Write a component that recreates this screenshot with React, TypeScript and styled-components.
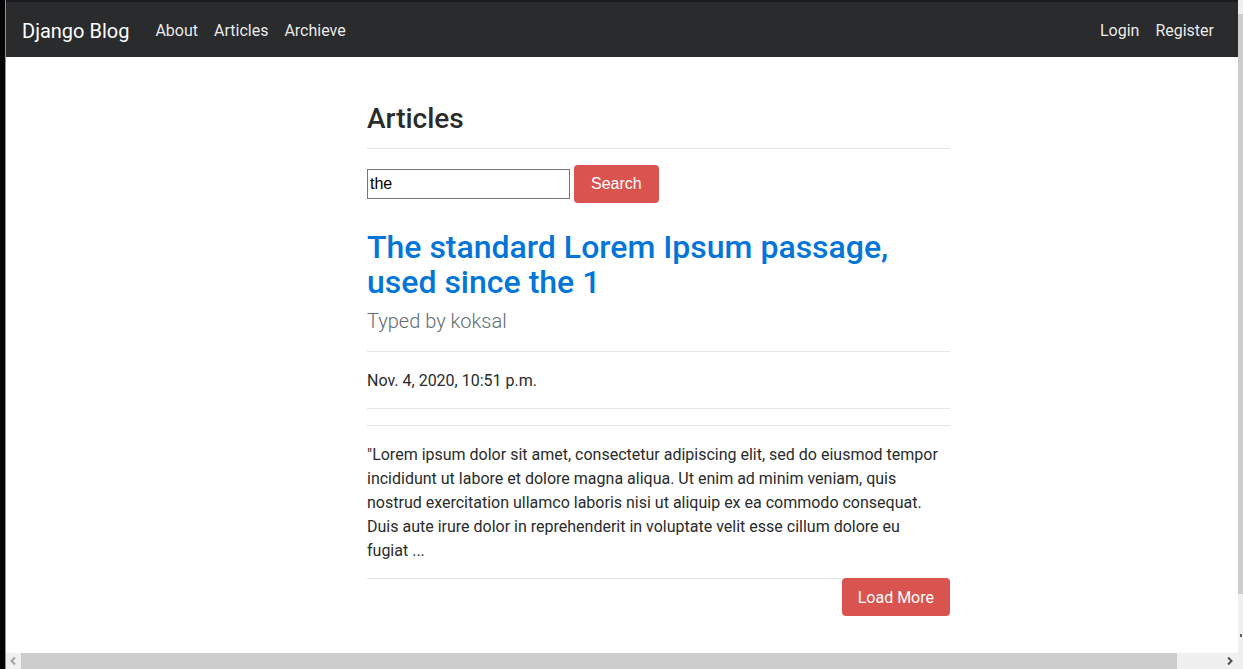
import React from "react";
import styled, { createGlobalStyle } from "styled-components";

const FONT = `"Segoe UI", Roboto, "Noto Sans", "Liberation Sans", sans-serif`;
const ARIAL = `"Liberation Sans", Arial, sans-serif`;

const Global = createGlobalStyle`
  html, body { margin: 0; padding: 0; background: #000; overflow: hidden; }
  * { box-sizing: border-box; }
`;

const Frame = styled.div`
  display: flex;
  width: 1243px;
  height: 669px;
  background: #000;
  font-family: ${FONT};
`;

const EdgeStrip = styled.div`
  width: 5px;
  background: #050505;
`;

const AccentLine = styled.div`
  width: 1px;
  background: #1cc6d3;
`;

const Viewport = styled.div`
  display: flex;
  flex-direction: column;
  width: 1232px;
`;

const TopStrip = styled.div`
  height: 2px;
  background: #1a1b1f;
`;

const Navbar = styled.nav`
  display: flex;
  align-items: center;
  height: 55px;
  padding: 3px 16px 0;
  background: #292b2c;
`;

const Brand = styled.a`
  font-size: 20px;
  line-height: 30px;
  color: #fff;
  margin-right: 18px;
  text-decoration: none;
`;

const NavList = styled.div<{ $push?: boolean }>`
  display: flex;
  margin-left: ${(p) => (p.$push ? "auto" : "0")};
`;

const NavLink = styled.a`
  padding: 0 8px;
  font-size: 16px;
  line-height: 24px;
  color: rgba(255, 255, 255, 0.92);
  text-decoration: none;
`;

const Page = styled.main`
  flex: 1;
  background: #fff;
  overflow: hidden;
`;

const Container = styled.div`
  width: 583px;
  margin-left: 361px;
  padding-top: 47px;
  color: #292b2c;
`;

const Heading = styled.h3`
  margin: 0;
  font-size: 28px;
  font-weight: 500;
  line-height: 1.1;
`;

const Rule = styled.hr<{ $top?: number; $bottom?: number }>`
  border: 0;
  border-top: 1px solid rgba(0, 0, 0, 0.1);
  margin: ${(p) => p.$top ?? 16}px 0 ${(p) => p.$bottom ?? 16}px;
`;

const SearchForm = styled.form`
  display: flex;
  align-items: center;
  gap: 4px;
  margin: 0 0 27px;
`;

const SearchInput = styled.input`
  width: 203px;
  height: 30px;
  padding: 1px 2px;
  border: 1px solid #767676;
  font-family: ${ARIAL};
  font-size: 16px;
  color: #000;
`;

const DangerButton = styled.button<{ $arial?: boolean }>`
  height: 38px;
  padding: 0 ${(p) => (p.$arial ? 17 : 16)}px;
  border: 0;
  border-radius: 4px;
  background: #d9534f;
  color: #fff;
  font-family: ${(p) => (p.$arial ? ARIAL : FONT)};
  font-size: 16px;
`;

const Title = styled.h2`
  margin: 0 0 6px;
  font-size: 32px;
  font-weight: 500;
  line-height: 1.1;
  color: #0275d8;
`;

const Lead = styled.p`
  margin: 0;
  font-size: 20px;
  font-weight: 300;
  line-height: 1.5;
  color: #636c72;
`;

const Text = styled.p`
  margin: 0;
  max-width: 575px;
  font-size: 16px;
  line-height: 24px;
`;

const Footer = styled.div`
  display: flex;
  align-items: flex-start;
  margin-top: 15px;
`;

const FooterRule = styled.div`
  flex: 1;
  border-top: 1px solid rgba(0, 0, 0, 0.1);
`;

const HScroll = styled.div`
  display: flex;
  height: 16px;
  background: #f0f0f0;
`;

const ArrowCell = styled.div<{ $w: number }>`
  display: flex;
  align-items: center;
  justify-content: center;
  width: ${(p) => p.$w}px;
`;

const HThumb = styled.div`
  width: 1156px;
  background: #cdcdcd;
`;

const Track = styled.div`
  flex: 1;
`;

const VScroll = styled.div`
  display: flex;
  flex-direction: column;
  width: 5px;
  background: #f0f0f0;
`;

const VThumb = styled.div`
  height: 580px;
  margin-top: 14px;
  background: #cdcdcd;
`;

const VArrowDot = styled.div`
  width: 2px;
  height: 3px;
  margin: 40px 0 0 2px;
  background: #606060;
`;

const Chevron = ({ dir, color }: { dir: "left" | "right"; color: string }) => (
  <svg width="7" height="8" viewBox="0 0 7 8">
    <path
      d={dir === "left" ? "M5 0.5 L1.5 4 L5 7.5" : "M2 0.5 L5.5 4 L2 7.5"}
      fill="none"
      stroke={color}
      strokeWidth="2"
    />
  </svg>
);

export default function App() {
  return (
    <>
      <Global />
      <Frame>
        <EdgeStrip />
        <AccentLine />
        <Viewport>
          <TopStrip />
          <Navbar>
            <Brand href="#">Django Blog</Brand>
            <NavList>
              <NavLink href="#">About</NavLink>
              <NavLink href="#">Articles</NavLink>
              <NavLink href="#">Archieve</NavLink>
            </NavList>
            <NavList $push>
              <NavLink href="#">Login</NavLink>
              <NavLink href="#">Register</NavLink>
            </NavList>
          </Navbar>
          <Page>
            <Container>
              <Heading>Articles</Heading>
              <Rule $top={13} />
              <SearchForm onSubmit={(e) => e.preventDefault()}>
                <SearchInput defaultValue="the" />
                <DangerButton $arial type="submit">
                  Search
                </DangerButton>
              </SearchForm>
              <Title>The standard Lorem Ipsum passage, used since the 1</Title>
              <Lead>Typed by koksal</Lead>
              <Rule $top={15} $bottom={17} />
              <Text>Nov. 4, 2020, 10:51 p.m.</Text>
              <Rule $top={15} />
              <Rule $top={0} $bottom={17} />
              <Text>
                "Lorem ipsum dolor sit amet, consectetur adipiscing elit, sed do eiusmod tempor
                incididunt ut labore et dolore magna aliqua. Ut enim ad minim veniam, quis nostrud
                exercitation ullamco laboris nisi ut aliquip ex ea commodo consequat. Duis aute irure
                dolor in reprehenderit in voluptate velit esse cillum dolore eu fugiat ...
              </Text>
              <Footer>
                <FooterRule />
                <DangerButton type="button">Load More</DangerButton>
              </Footer>
            </Container>
          </Page>
          <HScroll>
            <ArrowCell $w={15}>
              <Chevron dir="left" color="#a3a3a3" />
            </ArrowCell>
            <HThumb />
            <Track />
            <ArrowCell $w={17}>
              <Chevron dir="right" color="#505050" />
            </ArrowCell>
          </HScroll>
        </Viewport>
        <VScroll>
          <VThumb />
          <VArrowDot />
        </VScroll>
      </Frame>
    </>
  );
}
